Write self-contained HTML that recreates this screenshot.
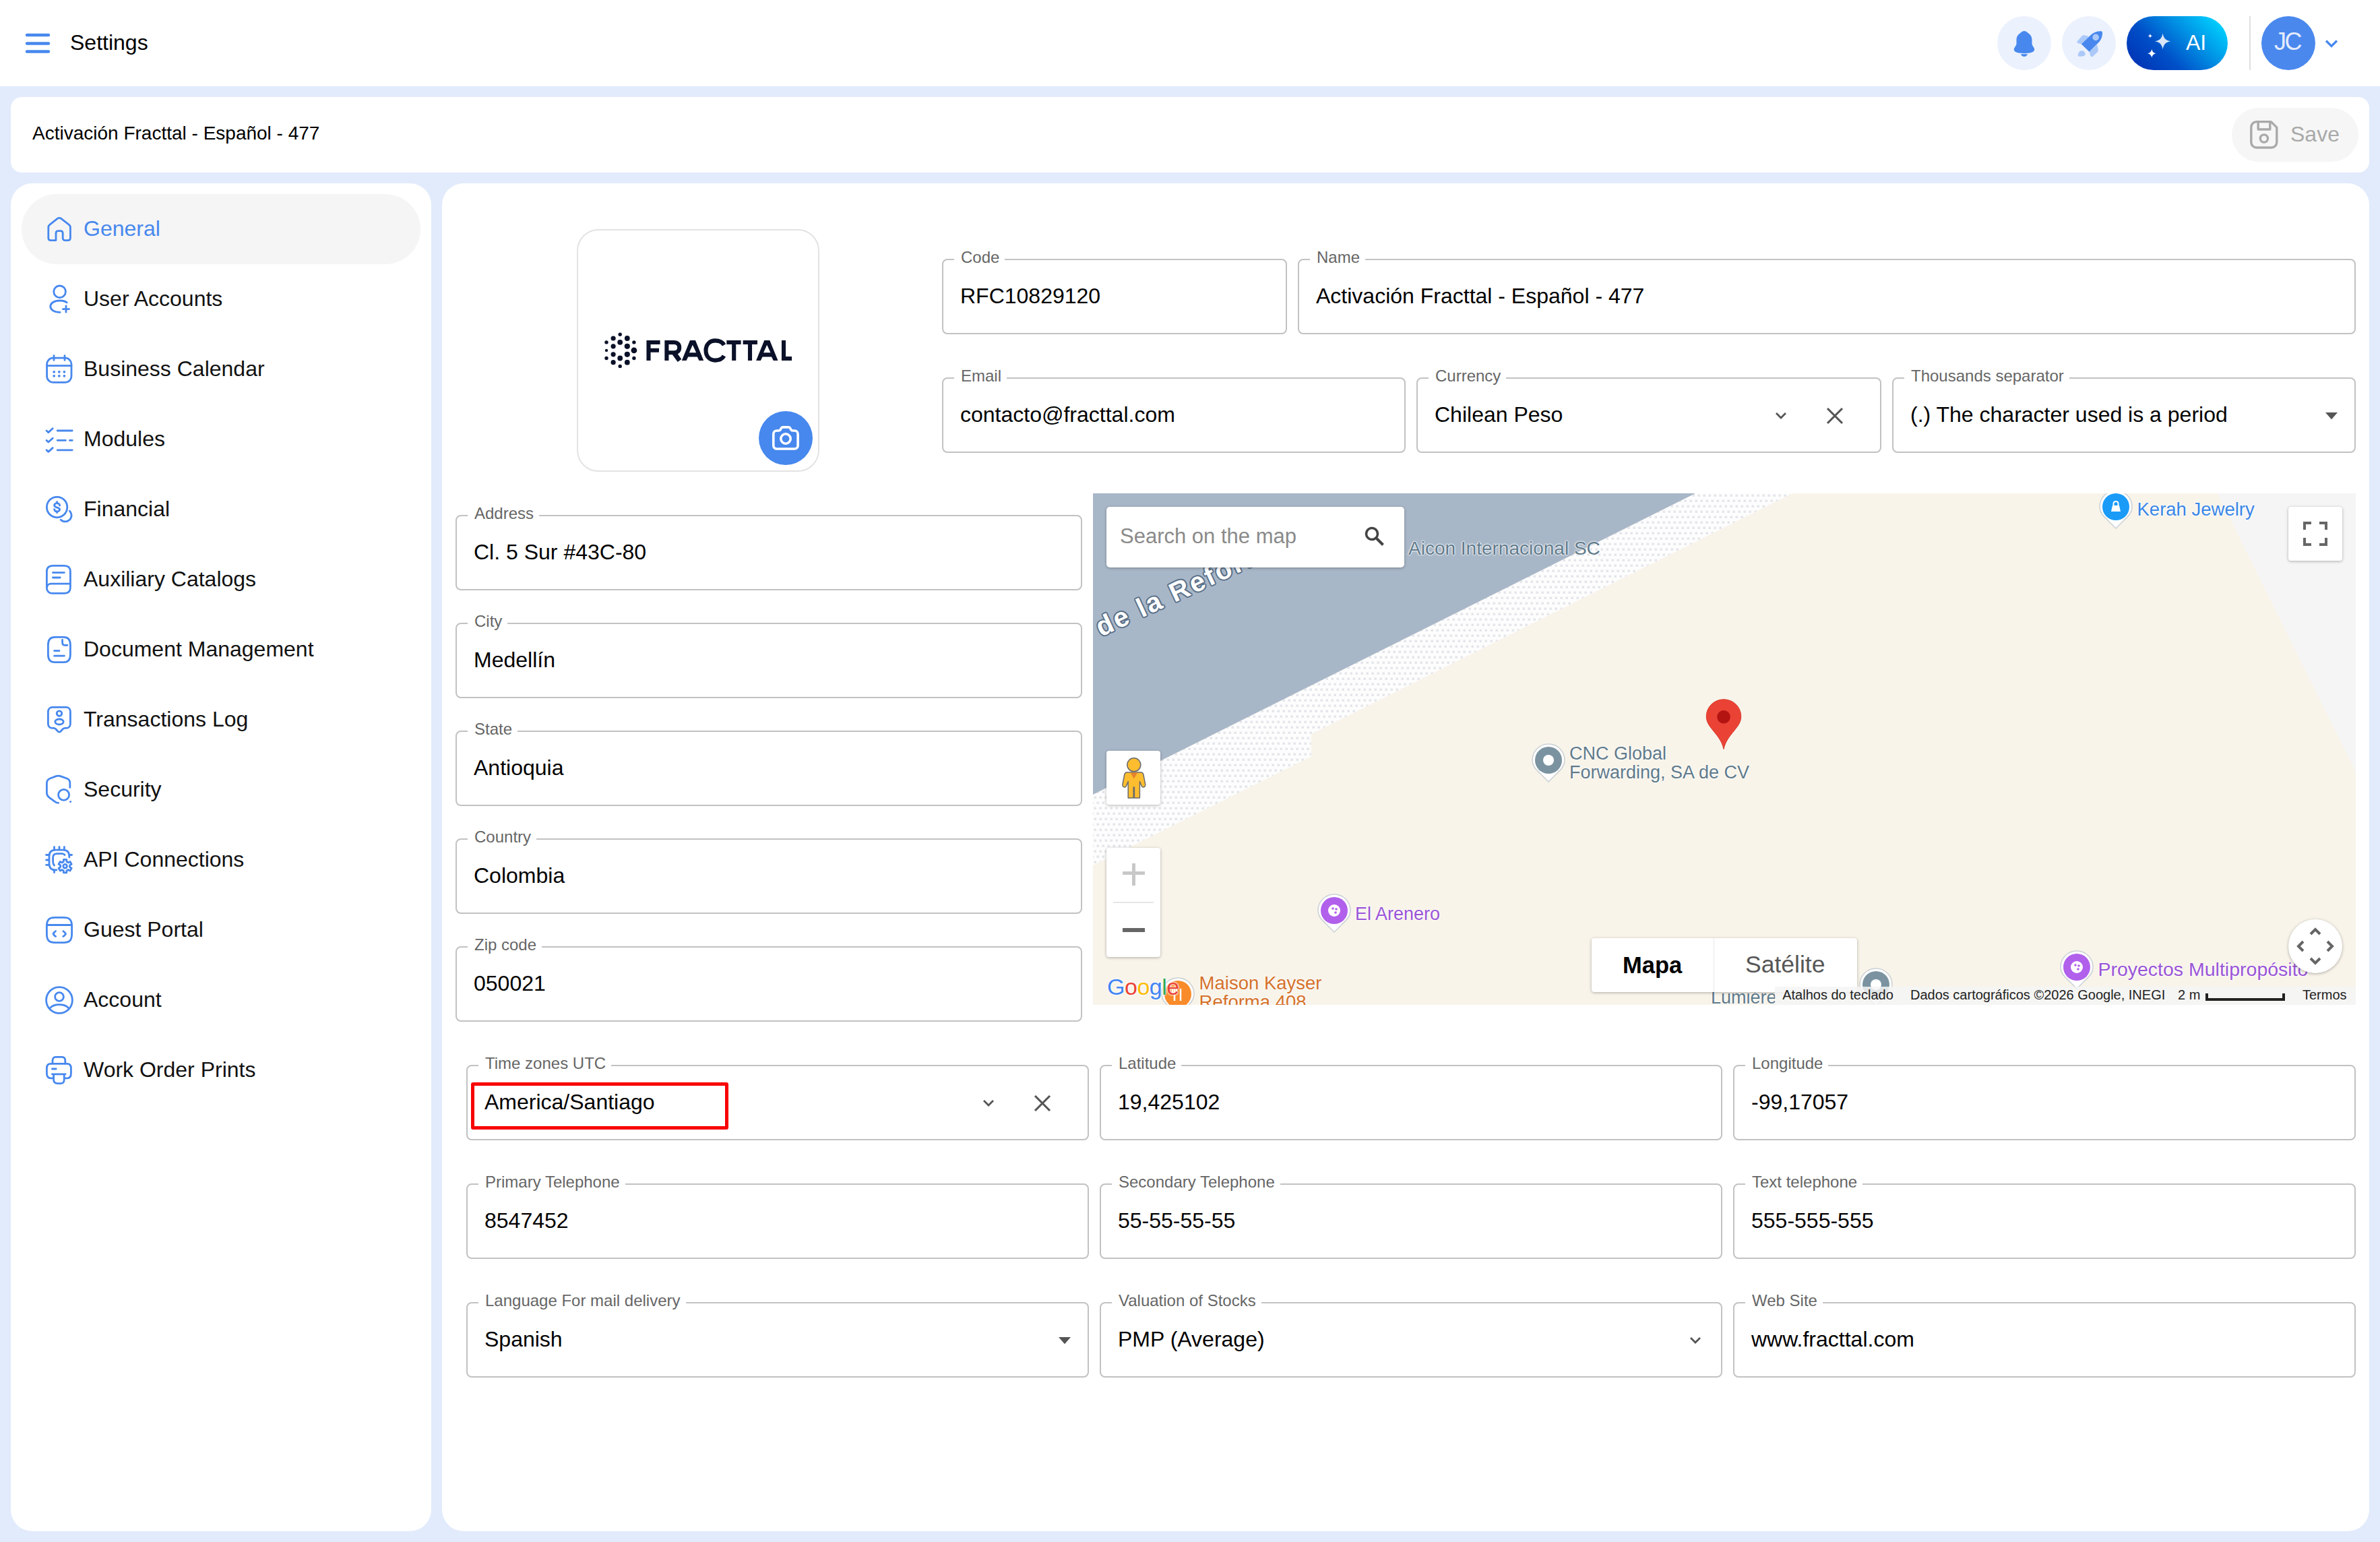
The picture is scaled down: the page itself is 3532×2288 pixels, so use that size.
<!DOCTYPE html>
<html><head><meta charset="utf-8">
<style>
*{box-sizing:border-box;margin:0;padding:0}
html,body{width:3532px;height:2288px;overflow:hidden;background:#e2ebfc;font-family:"Liberation Sans",sans-serif;color:#000}
.abs{position:absolute}
#hdr{position:absolute;left:0;top:0;width:3532px;height:128px;background:#fff}
.card{position:absolute;background:#fff}
.t{position:absolute;white-space:nowrap;line-height:1}
.f{position:absolute;border:2px solid #c2c2c2;border-radius:8px;background:#fff}
.f .lb{position:absolute;top:-16.5px;left:16px;padding:0 8px 0 10px;background:#fff;font-size:24px;line-height:24px;color:#666;white-space:nowrap}
.f .v{position:absolute;top:37px;left:25px;font-size:32px;line-height:32px;color:#000;white-space:nowrap}
.nav{position:absolute;left:32px;width:592px;height:104px}
.nav .tx{position:absolute;left:92px;top:35px;font-size:32px;line-height:32px;color:#111;white-space:nowrap}
.ico{position:absolute;left:32px;top:28px;width:48px;height:48px;overflow:visible}
.ico *{fill:none;stroke:#4788ee;stroke-width:1.4;stroke-linecap:round;stroke-linejoin:round}
.ml{position:absolute;white-space:nowrap;line-height:1;text-shadow:0 0 2px #fff,0 0 2px #fff,0 0 3px #fff}
</style><script>(function(){var w=window.innerWidth;if(w&&Math.abs(w-3532)>4){document.documentElement.style.zoom=(w/3532);}})();</script></head><body>
<div id="hdr">
<svg class="abs" style="left:36px;top:48px" width="40" height="32" viewBox="0 0 40 32"><g stroke="#4788ee" stroke-width="4.4" stroke-linecap="round"><line x1="4" y1="4" x2="36" y2="4"/><line x1="4" y1="16.5" x2="36" y2="16.5"/><line x1="4" y1="28.5" x2="36" y2="28.5"/></g></svg>
<div class="t" style="left:104px;top:47px;font-size:32px">Settings</div>
<svg class="abs" style="left:2964px;top:24px" width="80" height="80" viewBox="0 0 80 80"><circle cx="40" cy="40" r="40" fill="#ebf1fd"/>
<path fill="#4888ee" d="M40 22C37.5 22 36 23.5 34.5 24.8C31 27.2 28.5 30 28.5 35.5V41C28.5 43 26.5 45 25.3 47.3C24 50 25.5 52.8 29 53.8C32.5 54.8 36 55.2 40 55.2C44 55.2 47.5 54.8 51 53.8C54.5 52.8 56 50 54.7 47.3C53.5 45 51.5 43 51.5 41V35.5C51.5 30 49 27.2 45.5 24.8C44 23.5 42.5 22 40 22Z"/>
<path fill="#4888ee" d="M34.8 56.3H45.2C44.3 58.6 42.4 60 40 60C37.6 60 35.7 58.6 34.8 56.3Z"/></svg>
<svg class="abs" style="left:3060px;top:24px" width="80" height="80" viewBox="0 0 80 80"><circle cx="40" cy="40" r="40" fill="#ebf1fd"/>
<path fill="#abc9f8" d="M22.4 37.5C22 39 23 40 24.5 40.3L29.5 41.8L40 30L33.5 28.3C32 28 30.8 28.3 29.8 29.2Z"/>
<path fill="#abc9f8" d="M52.3 42L53.8 50C54 51.3 53.6 52.4 52.7 53.3L46.2 59.6C45 60.6 42.8 60.3 42.2 58.6L40.5 52.7Z"/>
<path fill="#abc9f8" d="M23.8 59.2C23.6 56.8 24.5 54 26 52.6C28 50.8 31.5 51 33.4 53C35.3 55.2 35 57.8 33 58.9C30.5 59.9 26.5 60 23.8 59.2Z"/>
<path fill="#4888ee" d="M28.9 41.5L40.5 52.7L54.2 39.3C58.2 35.3 60.2 30 60 24C59.9 22.9 59.1 22.2 58 22.2C52 22.1 46.7 24 42.7 28Z"/>
<circle cx="50.2" cy="31.4" r="4.8" fill="#abc9f8"/></svg>
<svg class="abs" style="left:3156px;top:24px" width="150" height="80" viewBox="0 0 150 80"><defs><linearGradient id="aig" x1="0.05" y1="0.75" x2="0.98" y2="0.25"><stop offset="0" stop-color="#0038b8"/><stop offset="0.3" stop-color="#0050c8"/><stop offset="0.65" stop-color="#0090e4"/><stop offset="1" stop-color="#00cdfd"/></linearGradient></defs>
<rect x="0" y="0" width="150" height="80" rx="40" fill="url(#aig)"/>
<path fill="#d9e6f8" d="M53.6 25.3C54.6 32.6 58.5 36.5 65.4 37.3C58.5 38.2 54.6 42 53.6 49.3C52.6 42 48.8 38.2 41.8 37.3C48.8 36.5 52.6 32.6 53.6 25.3Z"/>
<path fill="#fff" d="M37.3 49C37.9 52.5 39.8 54.5 43.5 55.2C39.8 56 37.9 58 37.3 61.4C36.7 58 34.8 56 31.1 55.2C34.8 54.5 36.7 52.5 37.3 49Z"/>
<path fill="#fff" d="M34.9 26C35.2 28 36.2 29 38.3 29.3C36.2 29.7 35.2 30.7 34.9 32.7C34.6 30.7 33.6 29.7 31.5 29.3C33.6 29 34.6 28 34.9 26Z"/></svg>
<div class="t" style="left:3244px;top:46.7px;font-size:32px;color:#fff">AI</div>
<div class="abs" style="left:3338px;top:24px;width:2px;height:80px;background:#e0e0e0"></div>
<div class="abs" style="left:3356px;top:24px;width:80px;height:80px;border-radius:40px;background:#4a88ee"></div>
<div class="t" style="left:3375px;top:44.3px;font-size:36px;letter-spacing:-2.5px;color:#e3ecfd">JC</div>
<svg class="abs" style="left:3448px;top:56px" width="24" height="18" viewBox="0 0 24 18"><path d="M4 4.5L12 12.5L20 4.5" fill="none" stroke="#4788ee" stroke-width="3.2"/></svg>
</div>
<div class="card" style="left:16px;top:144px;width:3500px;height:112px;border-radius:16px">
<div class="t" style="left:32px;top:40px;font-size:28px">Activación Fracttal - Español - 477</div>
<div class="abs" style="left:3296px;top:16px;width:188px;height:80px;border-radius:40px;background:#f6f6f6"></div>
<svg class="abs" style="left:3300px;top:24px" width="80" height="64" viewBox="3316 168 80 64"><g fill="none" stroke="#a9a9a9" stroke-width="3.4" stroke-linejoin="round">
<path d="M3348.8 180.6H3370.3L3378.8 189.1V211C3378.8 215.4 3375.4 219 3371 219H3348.6C3344.2 219 3340.8 215.4 3340.8 211V188.6C3340.8 184.2 3344.4 180.6 3348.8 180.6Z"/>
<path d="M3351.2 180.6V192H3368.8V180.6"/><circle cx="3359.9" cy="205.5" r="5.6"/></g></svg>
<div class="t" style="left:3383px;top:38.5px;font-size:32px;color:#a9a9a9">Save</div>
</div>
<div class="card" style="left:16px;top:272px;width:624px;height:2000px;border-radius:32px"></div>
<div class="nav" style="top:288px;background:#f5f5f5;border-radius:52px;"><svg class="ico" viewBox="0 0 24 24"><path d="M9.5 20.3H5.6C4.6 20.3 3.9 19.6 3.9 18.6V10.7C3.9 9.9 4.3 9.2 4.9 8.7L10.6 4.2C11.4 3.6 12.6 3.6 13.4 4.2L19.2 8.7C19.8 9.2 20.2 9.9 20.2 10.7V18.6C20.2 19.6 19.5 20.3 18.5 20.3H16.3C15.3 20.3 14.6 19.6 14.6 18.6V15C14.6 14 13.9 13.3 12.9 13.3H11.2C10.2 13.3 9.5 14 9.5 15Z"/></svg><span class="tx" style="color:#4788ee;">General</span></div>
<div class="nav" style="top:392px;"><svg class="ico" viewBox="0 0 24 24"><circle cx="12.3" cy="6.4" r="4.4"/><path d="M17.6 14.4C16.4 13.5 14.6 13 12.5 13C8.2 13 5.4 14.9 5.4 17.4C5.4 19.8 8.2 21.7 12.5 21.7M14.7 19.3H19.3M17 17V21.6"/></svg><span class="tx" style="">User Accounts</span></div>
<div class="nav" style="top:496px;"><svg class="ico" viewBox="0 0 24 24"><rect x="2.8" y="3.6" width="18.2" height="18.1" rx="4.6"/><path d="M2.8 9.3H21M8 1.8V5.2M16 1.8V5.2"/><g style="fill:#4788ee;stroke:none"><circle style="fill:#4788ee;stroke:none" cx="8.1" cy="13.9" r="0.95"/><circle style="fill:#4788ee;stroke:none" cx="11.9" cy="13.9" r="0.95"/><circle style="fill:#4788ee;stroke:none" cx="15.7" cy="13.9" r="0.95"/><circle style="fill:#4788ee;stroke:none" cx="8.1" cy="16.9" r="0.95"/><circle style="fill:#4788ee;stroke:none" cx="11.9" cy="16.9" r="0.95"/><circle style="fill:#4788ee;stroke:none" cx="15.7" cy="16.9" r="0.95"/></g></svg><span class="tx" style="">Business Calendar</span></div>
<div class="nav" style="top:600px;"><svg class="ico" viewBox="0 0 24 24"><path d="M10.6 5.5H21.6M10.6 12.7H16.7M19.7 12.7H21.6M10.6 19.9H21.6M2.5 5.5L3.9 6.8L7.1 3.9M2.5 12.7L3.9 14L7.1 11.1M2.5 19.9L3.9 21.2L7.1 18.3"/></svg><span class="tx" style="">Modules</span></div>
<div class="nav" style="top:704px;"><svg class="ico" viewBox="0 0 24 24"><circle cx="10.3" cy="10.3" r="7.6"/><path d="M19.7 13.1A4.6 4.6 0 1 1 13.1 19.6"/><path d="M12.3 9C12.3 8 11.4 7.3 10.3 7.3C9.2 7.3 8.3 8 8.3 8.9C8.3 11.1 12.3 10 12.3 12C12.3 12.9 11.4 13.5 10.3 13.5C9.2 13.5 8.3 12.8 8.3 11.8M10.3 6.3V7.3M10.3 13.5V14.4"/></svg><span class="tx" style="">Financial</span></div>
<div class="nav" style="top:808px;"><svg class="ico" viewBox="0 0 24 24"><path d="M2.7 17.5V6C2.7 3.1 4.1 1.7 7.4 1.7H15.6C18.9 1.7 20.2 3.1 20.2 6V17.8C20.2 20.8 18.9 22.2 15.9 22.2H7C4.4 22.2 2.7 20.5 2.7 18.4C2.7 16.5 4.1 15.1 6 15.1H20.2M7.2 6.8H15.7M7.2 10.5H12.6"/></svg><span class="tx" style="">Auxiliary Catalogs</span></div>
<div class="nav" style="top:912px;"><svg class="ico" viewBox="0 0 24 24"><path d="M20.2 15.6V8.4C20.2 4.6 18.6 2.7 15.2 2.7H8.7C5.3 2.7 3.7 4.6 3.7 8.4V15.6C3.7 19.4 5.3 21.3 8.7 21.3H15.2C18.6 21.3 20.2 19.4 20.2 15.6Z"/><path d="M14.3 4.7V6.7C14.3 7.9 15.1 8.7 16.3 8.7H18M8.3 12.8H12M8.3 16.6H15.7"/></svg><span class="tx" style="">Document Management</span></div>
<div class="nav" style="top:1016px;"><svg class="ico" viewBox="0 0 24 24"><path d="M7 18.2H7.8C8.4 18.2 9 18.5 9.4 18.9L11 20.6C11.6 21.2 12.4 21.2 13 20.6L14.6 18.9C15 18.5 15.6 18.2 16.2 18.2H17C18.9 18.2 20.2 16.9 20.2 15V6C20.2 4.1 18.9 2.7 17 2.7H7C5.1 2.7 3.7 4.1 3.7 6V15C3.7 16.9 5.1 18.2 7 18.2Z"/><circle cx="12" cy="7.3" r="1.9"/><ellipse cx="12" cy="13.5" rx="3.1" ry="2"/></svg><span class="tx" style="">Transactions Log</span></div>
<div class="nav" style="top:1120px;"><svg class="ico" viewBox="0 0 24 24"><path d="M19.9 10.2V6.8C19.9 5.3 18.9 4 17.5 3.5L12.8 1.8C11.8 1.5 10.7 1.5 9.7 1.8L5.2 3.5C3.7 4.1 2.7 5.4 2.7 7V14C2.7 15.5 3.5 16.9 4.7 17.8L9.2 21.1C9.8 21.5 10.5 21.7 11.3 21.7"/><circle cx="15.3" cy="15.7" r="4"/><circle style="fill:#4788ee;stroke:none" cx="20.3" cy="20.7" r="0.75"/></svg><span class="tx" style="">Security</span></div>
<div class="nav" style="top:1224px;"><svg class="ico" viewBox="0 0 24 24"><path d="M8.25 2.3V4M12 2.3V4M15.7 2.3V4M2.3 8.25H4M2.3 12H4M2.3 15.7H4M19.8 8.25H21.3M8.25 19.6V21.3"/><path d="M19.4 10V9.3C19.4 6.2 17.9 4.6 14.7 4.6H9.3C6.1 4.6 4.5 6.2 4.5 9.3V14.7C4.5 17.9 6.1 19.4 9.3 19.4H10"/><path d="M8.25 16C7.6 15.3 7.3 14.5 7.3 13.5V10.4C7.3 8.3 8.3 7.3 10.3 7.3H14C15 7.3 15.6 7.6 16 8.25"/><circle cx="16.3" cy="16.6" r="1.4"/><path d="M14.55 13.57 L15.13 13.30 L15.21 11.72 L17.39 11.72 L17.47 13.30 L18.05 13.57 L18.57 13.94 L19.98 13.22 L21.07 15.10 L19.74 15.96 L19.80 16.60 L19.74 17.24 L21.07 18.10 L19.98 19.98 L18.57 19.26 L18.05 19.63 L17.47 19.90 L17.39 21.48 L15.21 21.48 L15.13 19.90 L14.55 19.63 L14.03 19.26 L12.62 19.98 L11.53 18.10 L12.86 17.24 L12.80 16.60 L12.86 15.96 L11.53 15.10 L12.62 13.22 L14.03 13.94Z"/></svg><span class="tx" style="">API Connections</span></div>
<div class="nav" style="top:1328px;"><svg class="ico" viewBox="0 0 24 24"><path d="M9 21.3H15C19.6 21.3 21.3 19.6 21.3 15V9C21.3 4.4 19.6 2.7 15 2.7H9C4.4 2.7 2.7 4.4 2.7 9V15C2.7 19.6 4.4 21.3 9 21.3Z"/><path d="M2.9 8.25H21.1M9.3 12.8C8.5 13.3 7.9 13.9 7.5 14.8C7.9 15.7 8.5 16.3 9.3 16.7M14.9 12.8C15.7 13.3 16.3 13.9 16.8 14.8C16.3 15.7 15.7 16.3 14.9 16.7"/></svg><span class="tx" style="">Guest Portal</span></div>
<div class="nav" style="top:1432px;"><svg class="ico" viewBox="0 0 24 24"><circle cx="12" cy="12" r="9.7"/><circle cx="12" cy="9.5" r="3.2"/><path d="M5.2 17.8C6.6 16.2 9.1 15.3 12 15.3C14.9 15.3 17.4 16.2 18.8 17.8"/></svg><span class="tx" style="">Account</span></div>
<div class="nav" style="top:1536px;"><svg class="ico" viewBox="0 0 24 24"><path d="M7 7.1V4.9C7 3.3 7.8 2.2 9.4 2.2H14C15.6 2.2 16.4 3.3 16.4 4.9V7.1"/><path d="M7.4 17.9H5.6C3.8 17.9 2.7 16.6 2.7 14.5V10.5C2.7 8.4 3.8 7.2 5.6 7.2H17.8C19.6 7.2 20.7 8.4 20.7 10.5V14.5C20.7 16.6 19.6 17.9 17.8 17.9H16"/><path d="M6.7 14.9H16.6M7.8 14.9V19C7.8 20.9 8.7 21.8 10.8 21.8H12.9C15 21.8 15.6 20.9 15.6 19V14.9M6.7 11H9.6"/></svg><span class="tx" style="">Work Order Prints</span></div>
<div class="card" style="left:656px;top:272px;width:2860px;height:2000px;border-radius:32px"></div>
<div class="abs" style="left:856px;top:340px;width:360px;height:360px;border:2px solid #e3e3e3;border-radius:32px;background:#fff"></div>
<svg class="abs" style="left:856px;top:340px" width="360" height="360" viewBox="856 340 360 360"><g fill="#0a1128"><circle cx="920.2" cy="496.3" r="2.7"/><circle cx="910.1" cy="502" r="3.6"/><circle cx="930.8" cy="502" r="3.9"/><circle cx="900" cy="507.9" r="2.7"/><circle cx="920.2" cy="507.9" r="3.9"/><circle cx="940.9" cy="507.9" r="2.7"/><circle cx="910.1" cy="513.8" r="3.6"/><circle cx="930.8" cy="513.8" r="4.1"/><circle cx="900" cy="519.9" r="2.2"/><circle cx="940.9" cy="519.9" r="4.4"/><circle cx="910.1" cy="525.8" r="3.6"/><circle cx="930.8" cy="525.8" r="4.1"/><circle cx="900" cy="531.5" r="2.7"/><circle cx="920.2" cy="531.5" r="3.9"/><circle cx="940.9" cy="531.5" r="2.7"/><circle cx="910.1" cy="537.7" r="3.6"/><circle cx="930.8" cy="537.7" r="3.9"/><circle cx="920.2" cy="543.4" r="2.7"/></g><g fill="none" stroke="#0a1128" stroke-width="6.1"><path d="M962.5 535V508H979.6M962.5 519.7H978"/><path d="M989.4 535V508H1000C1005.5 508 1008.2 511 1008.2 515.7C1008.2 520.4 1005.5 523.3 1000 523.3H992"/><path d="M1000 523.3L1008.5 535" stroke-width="7"/><path fill="#0a1128" stroke="none" fill-rule="evenodd" d="M1011.8 535.0 L1024.0 505.0 L1032.0 505.0 L1044.2 535.0 L1037.4 535.0 L1034.8 529.4 L1021.2 529.4 L1018.6 535.0ZM1022.8 523.3 L1027.9 511.8 L1033.2 523.3Z"/><path d="M1074.5 512C1072 507.5 1067.5 505.4 1061.5 505.4C1053 505.4 1047.5 511.5 1047.5 520C1047.5 528.5 1053 534.6 1061.5 534.6C1067.5 534.6 1072 532.3 1074.5 528"/><path d="M1078.3 508H1099.6M1089.2 508V535M1102.6 508H1124M1113 508V535"/><path fill="#0a1128" stroke="none" fill-rule="evenodd" d="M1122.1 535.0 L1134.3 505.0 L1142.3 505.0 L1154.5 535.0 L1147.7 535.0 L1145.1 529.4 L1131.5 529.4 L1128.9 535.0ZM1133.1 523.3 L1138.2 511.8 L1143.5 523.3Z"/><path d="M1163 505V532H1175.1"/></g></svg>
<svg class="abs" style="left:1126px;top:610px" width="80" height="80" viewBox="1126 610 80 80"><circle cx="1166" cy="650" r="40" fill="#4788ee"/>
<g fill="none" stroke="#fff" stroke-width="3.6" stroke-linejoin="round"><path d="M1152.8 639H1155.5C1157 639 1158 638 1158.6 636.8L1159.4 635.2C1160 634 1161 633.9 1162.2 633.9H1169.8C1171 633.9 1172 634 1172.6 635.2L1173.4 636.8C1174 638 1175 639 1176.5 639H1179.2C1182 639 1184.1 641.1 1184.1 643.9V661.1C1184.1 663.9 1182 666 1179.2 666H1152.8C1150 666 1147.8 663.9 1147.8 661.1V643.9C1147.8 641.1 1150 639 1152.8 639Z"/>
<circle cx="1166" cy="651" r="7.2"/></g></svg>
<div class="f" style="left:1398px;top:384px;width:512px;height:112px"><span class="lb">Code</span><span class="v">RFC10829120</span></div>
<div class="f" style="left:1926px;top:384px;width:1570px;height:112px"><span class="lb">Name</span><span class="v">Activación Fracttal - Español - 477</span></div>
<div class="f" style="left:1398px;top:560px;width:688px;height:112px"><span class="lb">Email</span><span class="v">contacto@fracttal.com</span></div>
<div class="f" style="left:2102px;top:560px;width:690px;height:112px"><span class="lb">Currency</span><span class="v">Chilean Peso</span><svg class="abs" style="right:137px;top:47.5px" width="22" height="14" viewBox="0 0 22 14"><path d="M5 3L12 10L19 3" fill="none" stroke="#555" stroke-width="2.8"/></svg><svg class="abs" style="right:54px;top:41.5px" width="26" height="26" viewBox="0 0 26 26"><path d="M2 2L24 24M24 2L2 24" fill="none" stroke="#555" stroke-width="3.1"/></svg></div>
<div class="f" style="left:2808px;top:560px;width:688px;height:112px"><span class="lb">Thousands separator</span><span class="v">(.) The character used is a period</span><svg class="abs" style="right:24.8px;top:49.8px" width="18" height="11" viewBox="0 0 18 11"><path d="M0 0H18L9 10.3Z" fill="#555"/></svg></div>
<div class="f" style="left:676px;top:764px;width:930px;height:112px"><span class="lb">Address</span><span class="v">Cl. 5 Sur #43C-80</span></div>
<div class="f" style="left:676px;top:924px;width:930px;height:112px"><span class="lb">City</span><span class="v">Medellín</span></div>
<div class="f" style="left:676px;top:1084px;width:930px;height:112px"><span class="lb">State</span><span class="v">Antioquia</span></div>
<div class="f" style="left:676px;top:1244px;width:930px;height:112px"><span class="lb">Country</span><span class="v">Colombia</span></div>
<div class="f" style="left:676px;top:1404px;width:930px;height:112px"><span class="lb">Zip code</span><span class="v">050021</span></div>
<div class="abs" style="left:1622px;top:732px;width:1874px;height:759px;background:#f8f4ea;overflow:hidden">
<svg class="abs" style="left:0;top:0" width="1874" height="759">
<defs><pattern id="dots" width="8" height="16" patternUnits="userSpaceOnUse"><rect width="8" height="16" fill="#fdfdfd"/><rect x="1.5" y="1.5" width="3.5" height="3.5" fill="#e4e6eb"/><rect x="5.5" y="9.5" width="3.5" height="3.5" fill="#e4e6eb"/><rect x="-2.5" y="9.5" width="3.5" height="3.5" fill="#e4e6eb"/></pattern></defs>
<path d="M1669.0 0.0 L1874.0 0.0 L1874.0 413.0 Z" fill="#f5f5f5"/>
<path d="M894.0 0.0 L1038.0 0.0 L323.7 357.3 L323.7 390.6 L0.0 552.0 L0.0 447.0 Z" fill="url(#dots)"/>
<path d="M0.0 0.0 L894.0 0.0 L0.0 447.0 Z" fill="#a8b7c8"/>
</svg>
<div class="abs" style="left:12px;top:179px;transform-origin:0 34px;transform:rotate(-25deg);font-size:40px;line-height:40px;font-weight:700;color:#fff;letter-spacing:3px;white-space:nowrap;-webkit-text-stroke:0;text-shadow:-2px 0 #5b7189,2px 0 #5b7189,0 -2px #5b7189,0 2px #5b7189,-1.5px -1.5px #5b7189,1.5px 1.5px #5b7189,-1.5px 1.5px #5b7189,1.5px -1.5px #5b7189">de la Reforma</div>
<div class="ml" style="left:468.0px;top:67.7px;font-size:28px;line-height:28px;color:#5f7a8b;font-weight:400;">Aicon Internacional SC</div>
<svg class="abs" style="left:648.0px;top:367.6px;overflow:visible" width="56" height="64" viewBox="-28 -28 56 64"><path d="M0 -24C13.3 -24 24 -13.3 24 0C24 9 18 14 12 20L0 32L-12 20C-18 14 -24 9 -24 0C-24 -13.3 -13.3 -24 0 -24Z" fill="#fff" stroke="#9aa8b6" stroke-opacity="0.5" stroke-width="1.5"/><circle r="20" fill="#7b93a1"/><circle r="8" fill="#fff"/></svg>
<div class="ml" style="left:707.0px;top:372.8px;font-size:27px;line-height:27px;color:#5f7a8b;font-weight:400;">CNC Global</div>
<div class="ml" style="left:707.0px;top:400.5px;font-size:27px;line-height:27px;color:#5f7a8b;font-weight:400;">Forwarding, SA de CV</div>
<svg class="abs" style="left:1490.0px;top:-8.0px;overflow:visible" width="56" height="64" viewBox="-28 -28 56 64"><path d="M0 -24C13.3 -24 24 -13.3 24 0C24 9 18 14 12 20L0 32L-12 20C-18 14 -24 9 -24 0C-24 -13.3 -13.3 -24 0 -24Z" fill="#fff" stroke="#9aa8b6" stroke-opacity="0.5" stroke-width="1.5"/><circle r="20" fill="#1a9bf8"/><path d="M-7 7H7L5 -2H-5Z" fill="#fff"/><path d="M-3.5 -2V-4.5C-3.5 -6.5 -2 -8 0 -8C2 -8 3.5 -6.5 3.5 -4.5V-2" fill="none" stroke="#fff" stroke-width="2"/></svg>
<div class="ml" style="left:1549.5px;top:10.4px;font-size:27.5px;line-height:27.5px;color:#3a86e6;font-weight:400;">Kerah Jewelry</div>
<svg class="abs" style="left:329.7px;top:591.4px;overflow:visible" width="56" height="64" viewBox="-28 -28 56 64"><path d="M0 -24C13.3 -24 24 -13.3 24 0C24 9 18 14 12 20L0 32L-12 20C-18 14 -24 9 -24 0C-24 -13.3 -13.3 -24 0 -24Z" fill="#fff" stroke="#9aa8b6" stroke-opacity="0.5" stroke-width="1.5"/><circle r="20" fill="#b160ec"/><circle cx="0" cy="0" r="9" fill="#fff"/><circle cx="-2" cy="-3" r="1.8" fill="#b160ec"/><circle cx="3" cy="-2" r="1.8" fill="#b160ec"/><circle cx="2" cy="3" r="1.8" fill="#b160ec"/></svg>
<div class="ml" style="left:389.0px;top:611.1px;font-size:27px;line-height:27px;color:#9a55d6;font-weight:400;">El Arenero</div>
<svg class="abs" style="left:98.0px;top:715.0px;overflow:visible" width="56" height="64" viewBox="-28 -28 56 64"><path d="M0 -24C13.3 -24 24 -13.3 24 0C24 9 18 14 12 20L0 32L-12 20C-18 14 -24 9 -24 0C-24 -13.3 -13.3 -24 0 -24Z" fill="#fff" stroke="#9aa8b6" stroke-opacity="0.5" stroke-width="1.5"/><circle r="20" fill="#f98b2a"/><path d="M-5 -8V10M4 -8V10M-8 -8V-1H-2V-8" fill="none" stroke="#fff" stroke-width="2.5"/></svg>
<div class="ml" style="left:157.6px;top:712.7px;font-size:27.5px;line-height:27.5px;color:#d5712a;font-weight:400;">Maison Kayser</div>
<div class="ml" style="left:157.6px;top:740.7px;font-size:27.5px;line-height:27.5px;color:#d5712a;font-weight:400;">Reforma 408</div>
<svg class="abs" style="left:1133.8px;top:701.0px;overflow:visible" width="56" height="64" viewBox="-28 -28 56 64"><path d="M0 -24C13.3 -24 24 -13.3 24 0C24 9 18 14 12 20L0 32L-12 20C-18 14 -24 9 -24 0C-24 -13.3 -13.3 -24 0 -24Z" fill="#fff" stroke="#9aa8b6" stroke-opacity="0.5" stroke-width="1.5"/><circle r="20" fill="#7b93a1"/><circle r="8" fill="#fff"/></svg>
<div class="ml" style="left:917.0px;top:735.1px;font-size:27px;line-height:27px;color:#5f7a8b;font-weight:400;">Lumiére</div>
<svg class="abs" style="left:1431.6px;top:674.7px;overflow:visible" width="56" height="64" viewBox="-28 -28 56 64"><path d="M0 -24C13.3 -24 24 -13.3 24 0C24 9 18 14 12 20L0 32L-12 20C-18 14 -24 9 -24 0C-24 -13.3 -13.3 -24 0 -24Z" fill="#fff" stroke="#9aa8b6" stroke-opacity="0.5" stroke-width="1.5"/><circle r="20" fill="#b160ec"/><circle cx="0" cy="0" r="9" fill="#fff"/><circle cx="-2" cy="-3" r="1.8" fill="#b160ec"/><circle cx="3" cy="-2" r="1.8" fill="#b160ec"/><circle cx="2" cy="3" r="1.8" fill="#b160ec"/></svg>
<div class="ml" style="left:1491.4px;top:692.3px;font-size:28.5px;line-height:28.5px;color:#9a55d6;font-weight:400;">Proyectos Multipropósito</div>
<svg class="abs" style="left:908px;top:304px" width="56" height="78" viewBox="2530 1036 56 78">
<path d="M2558 1037.8C2572.2 1037.8 2583.7 1049 2583.7 1063C2583.7 1071 2580 1076 2574.5 1083C2566 1093.5 2560.5 1100 2558 1111.5C2555.5 1100 2550 1093.5 2541.5 1083C2536 1076 2532.3 1071 2532.3 1063C2532.3 1049 2543.8 1037.8 2558 1037.8Z" fill="#ea4335" stroke="#d8382b" stroke-width="1"/>
<circle cx="2558" cy="1063.8" r="9.8" fill="#b31412"/></svg>
<div class="ml" style="left:21px;top:715.2px;font-size:34px;line-height:34px;font-weight:400;letter-spacing:-0.5px"><span style="color:#4285f4">G</span><span style="color:#ea4335">o</span><span style="color:#fbbc05">o</span><span style="color:#4285f4">g</span><span style="color:#34a853">l</span><span style="color:#ea4335">e</span></div>
<div class="abs" style="left:20px;top:20px;width:442px;height:90px;background:#fff;border-radius:5px;box-shadow:0 1px 4px rgba(0,0,0,0.3)">
<div class="t" style="left:20px;top:27.7px;font-size:31px;color:#8a8a8a">Search on the map</div>
<svg class="abs" style="left:380px;top:26px" width="36" height="36" viewBox="0 0 36 36"><circle cx="14" cy="14" r="8.5" fill="none" stroke="#444" stroke-width="3.6"/><path d="M20 20L30.5 30.5" stroke="#444" stroke-width="4" stroke-linecap="butt"/></svg>
</div>
<div class="abs" style="left:20px;top:381.5px;width:80px;height:80px;background:#fff;border-radius:4px;box-shadow:0 1px 4px rgba(0,0,0,0.3)">
<svg class="abs" style="left:0;top:0" width="80" height="80" viewBox="0 0 80 80">
<g stroke="#6b6b6b" stroke-width="1.5" fill="#fdbd2f" stroke-linejoin="round">
<path d="M29.5 32C28 32.5 27.2 33.5 26.8 35L24 49.5C23.6 51.5 24.6 53.5 26.5 54C28 54.3 29 53.3 29.5 52L32.2 45.5V70H40.2V54H41.4V70H49.4V45.5L52.1 52C52.6 53.3 53.6 54.3 55.1 54C57 53.5 58 51.5 57.6 49.5L54.8 35C54.4 33.5 53.6 32.5 52.1 32Z"/>
<circle cx="40.8" cy="20.8" r="10"/></g>
<path d="M35.5 32.6H46.1L40.8 41.5Z" fill="#e3832c"/>
</svg></div>
<div class="abs" style="left:20px;top:526px;width:80px;height:162px;background:#fff;border-radius:4px;box-shadow:0 1px 4px rgba(0,0,0,0.3)">
<div class="abs" style="left:23.8px;top:35.0px;width:33px;height:5px;background:#c8c8c8"></div>
<div class="abs" style="left:37.8px;top:23.40000000000009px;width:5px;height:33px;background:#c8c8c8"></div>
<div class="abs" style="left:10px;top:80px;width:60px;height:2px;background:#e6e6e6"></div>
<div class="abs" style="left:23.8px;top:119px;width:33px;height:5.5px;background:#666"></div>
</div>
<div class="abs" style="left:1774px;top:20px;width:80px;height:80px;background:#fff;border-radius:4px;box-shadow:0 1px 4px rgba(0,0,0,0.3)">
<svg class="abs" style="left:0;top:0" width="80" height="80" viewBox="0 0 80 80"><path d="M24 34V24H34M46 24H56V34M56 46V56H46M34 56H24V46" fill="none" stroke="#666" stroke-width="4"/></svg></div>
<div class="abs" style="left:1774px;top:632px;width:80px;height:80px;background:#fff;border-radius:40px;box-shadow:0 1px 4px rgba(0,0,0,0.3)">
<svg class="abs" style="left:0;top:0" width="80" height="80" viewBox="0 0 80 80"><g fill="none" stroke="#666" stroke-width="4"><path d="M33 22L40 15L47 22M33 58L40 65L47 58M22 33L15 40L22 47M58 33L65 40L58 47"/></g></svg></div>
<div class="abs" style="left:740px;top:660px;width:394px;height:80px;background:#fff;border-radius:4px;box-shadow:0 1px 4px rgba(0,0,0,0.3)">
<div class="abs" style="left:181px;top:0;width:1px;height:80px;background:#e8e8e8"></div>
<div class="t" style="left:46px;top:23.1px;font-size:34.5px;font-weight:700;color:#000">Mapa</div>
<div class="t" style="left:228px;top:22.2px;font-size:35.5px;color:#565656">Satélite</div>
</div>
<div class="abs" style="left:1012px;top:732px;width:862px;height:27px;background:rgba(245,245,245,0.85)"></div>
<div class="ml" style="left:1023.2px;top:734.3px;font-size:20px;line-height:20px;color:#222;font-weight:400;text-shadow:none">Atalhos do teclado</div>
<div class="ml" style="left:1213.0px;top:734.3px;font-size:20px;line-height:20px;color:#222;font-weight:400;text-shadow:none">Dados cartográficos ©2026 Google, INEGI</div>
<div class="ml" style="left:1610.0px;top:734.3px;font-size:20px;line-height:20px;color:#222;font-weight:400;text-shadow:none">2 m</div>
<div class="abs" style="left:1650.5px;top:749px;width:118px;height:4px;background:#222"></div><div class="abs" style="left:1650.5px;top:741.5px;width:4px;height:11px;background:#222"></div><div class="abs" style="left:1764.5px;top:741.5px;width:4px;height:11px;background:#222"></div>
<div class="ml" style="left:1795.0px;top:734.3px;font-size:20px;line-height:20px;color:#222;font-weight:400;text-shadow:none">Termos</div>
</div>
<div class="f" style="left:692px;top:1580px;width:924px;height:112px"><span class="lb">Time zones UTC</span><span class="v">America/Santiago</span><svg class="abs" style="right:137px;top:47.5px" width="22" height="14" viewBox="0 0 22 14"><path d="M5 3L12 10L19 3" fill="none" stroke="#555" stroke-width="2.8"/></svg><svg class="abs" style="right:54px;top:41.5px" width="26" height="26" viewBox="0 0 26 26"><path d="M2 2L24 24M24 2L2 24" fill="none" stroke="#555" stroke-width="3.1"/></svg></div>
<div class="f" style="left:1632px;top:1580px;width:924px;height:112px"><span class="lb">Latitude</span><span class="v">19,425102</span></div>
<div class="f" style="left:2572px;top:1580px;width:924px;height:112px"><span class="lb">Longitude</span><span class="v">-99,17057</span></div>
<div class="f" style="left:692px;top:1756px;width:924px;height:112px"><span class="lb">Primary Telephone</span><span class="v">8547452</span></div>
<div class="f" style="left:1632px;top:1756px;width:924px;height:112px"><span class="lb">Secondary Telephone</span><span class="v">55-55-55-55</span></div>
<div class="f" style="left:2572px;top:1756px;width:924px;height:112px"><span class="lb">Text telephone</span><span class="v">555-555-555</span></div>
<div class="f" style="left:692px;top:1932px;width:924px;height:112px"><span class="lb">Language For mail delivery</span><span class="v">Spanish</span><svg class="abs" style="right:24.8px;top:49.8px" width="18" height="11" viewBox="0 0 18 11"><path d="M0 0H18L9 10.3Z" fill="#555"/></svg></div>
<div class="f" style="left:1632px;top:1932px;width:924px;height:112px"><span class="lb">Valuation of Stocks</span><span class="v">PMP (Average)</span><svg class="abs" style="right:28px;top:47.5px" width="22" height="14" viewBox="0 0 22 14"><path d="M5 3L12 10L19 3" fill="none" stroke="#555" stroke-width="2.8"/></svg></div>
<div class="f" style="left:2572px;top:1932px;width:924px;height:112px"><span class="lb">Web Site</span><span class="v">www.fracttal.com</span></div>
<div class="abs" style="left:699px;top:1606px;width:382px;height:70px;border:5px solid #f80000;border-radius:3px"></div>
</body></html>
